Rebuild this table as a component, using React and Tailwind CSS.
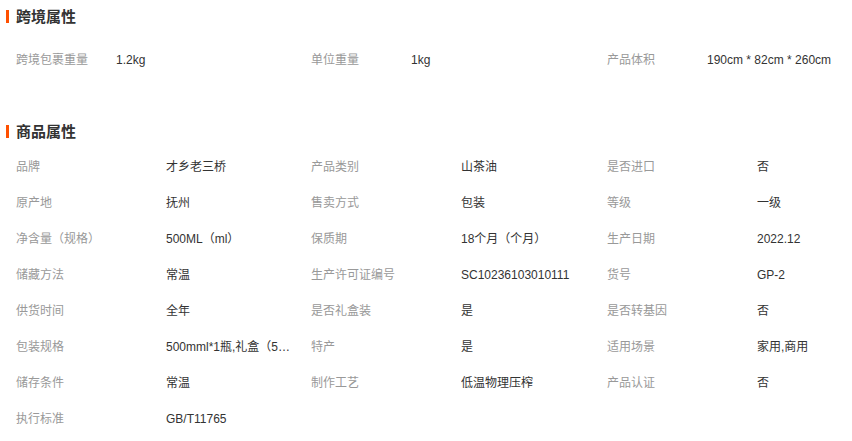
import React from "react";

const font = { fontFamily: '"Liberation Sans", "Noto Sans CJK SC", sans-serif' };

const cross = [
  ["跨境包裹重量", "1.2kg"],
  ["单位重量", "1kg"],
  ["产品体积", "190cm * 82cm * 260cm"],
];

const goods = [
  ["品牌", "才乡老三桥"],
  ["产品类别", "山茶油"],
  ["是否进口", "否"],
  ["原产地", "抚州"],
  ["售卖方式", "包装"],
  ["等级", "一级"],
  ["净含量（规格）", "500ML（ml）"],
  ["保质期", "18个月（个月）"],
  ["生产日期", "2022.12"],
  ["储藏方法", "常温"],
  ["生产许可证编号", "SC10236103010111"],
  ["货号", "GP-2"],
  ["供货时间", "全年"],
  ["是否礼盒装", "是"],
  ["是否转基因", "否"],
  ["包装规格", "500mml*1瓶,礼盒（500ml*2瓶）"],
  ["特产", "是"],
  ["适用场景", "家用,商用"],
  ["储存条件", "常温"],
  ["制作工艺", "低温物理压榨"],
  ["产品认证", "否"],
  ["执行标准", "GB/T11765"],
];

function Header({ title }) {
  return (
    <div className="flex h-8 items-center pl-[6px]">
      <div className="h-[13px] w-[3px] bg-[#ff5000]" />
      <div className="ml-[7px] text-[15px] font-bold leading-none text-[#333]">{title}</div>
    </div>
  );
}

export default function App() {
  return (
    <div className="h-[441px] w-[852px] overflow-hidden bg-white" style={font}>
      <Header title="跨境属性" />
      <div className="mt-[10px] grid grid-cols-[295px_296px_1fr] pl-4">
        {cross.map(([k, v]) => (
          <div key={k} className="flex h-9 items-center text-[12px]">
            <div className="w-[100px] shrink-0 text-[#999]">{k}</div>
            <div className="whitespace-nowrap text-[#333]">{v}</div>
          </div>
        ))}
      </div>
      <div className="mt-[37px]">
        <Header title="商品属性" />
      </div>
      <div className="mt-[2px] grid grid-cols-[295px_296px_1fr] pl-4">
        {goods.map(([k, v]) => (
          <div key={k} className="flex h-9 items-center text-[12px]">
            <div className="w-[150px] shrink-0 text-[#999]">{k}</div>
            <div className="w-[126px] truncate text-[#333]">{v}</div>
          </div>
        ))}
      </div>
    </div>
  );
}
